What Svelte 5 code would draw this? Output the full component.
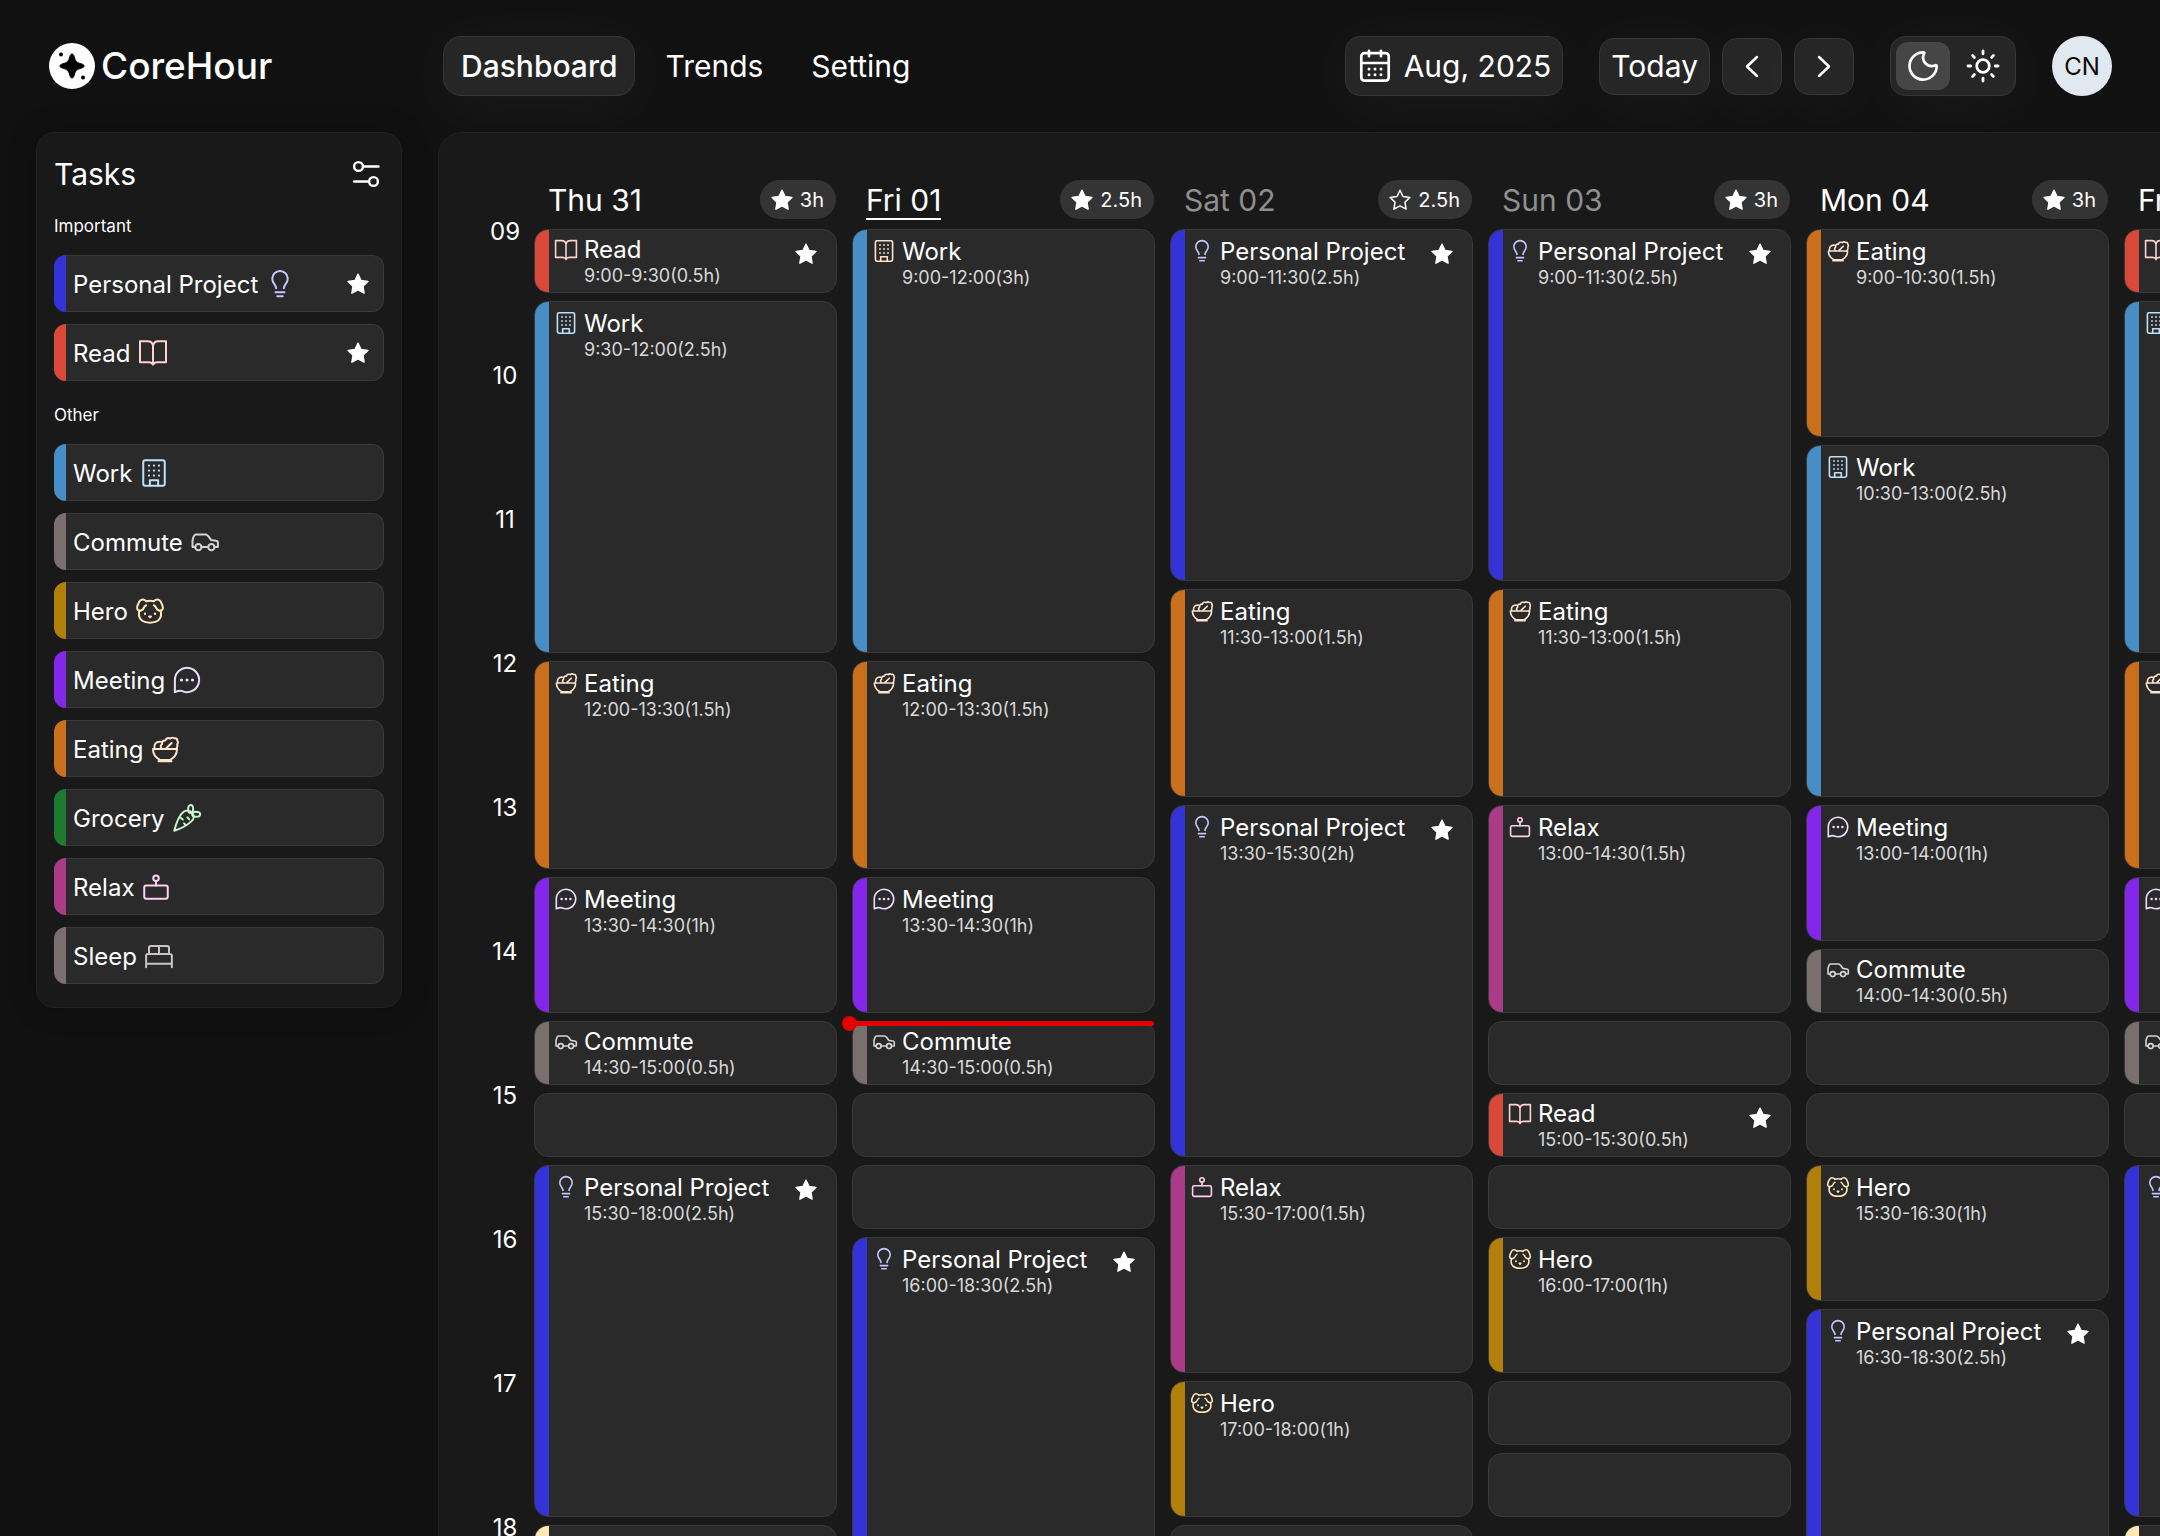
<script>
  let theme = $state('dark')

  const TASKS = {
    project: {name: 'Personal Project', color: '#3333d8', tint: '#c5c5ff'},
    read: {name: 'Read', color: '#d9493a', tint: '#ffd2cd'},
    work: {name: 'Work', color: '#468ec5', tint: '#bfe0fb'},
    commute: {name: 'Commute', color: '#7a6f6f', tint: '#d8d4d4'},
    hero: {name: 'Hero', color: '#b17f0a', tint: '#ffe8b5'},
    meeting: {name: 'Meeting', color: '#8427ea', tint: '#ecdcff'},
    eating: {name: 'Eating', color: '#ca701d', tint: '#ffe4cc'},
    grocery: {name: 'Grocery', color: '#1e7a2d', tint: '#c4f5cc'},
    relax: {name: 'Relax', color: '#ab3b87', tint: '#ffd0ee'},
    sleep: {name: 'Sleep', color: '#7a6f6f', tint: '#c9c5c5'}
  }

  const SECTIONS = [
    {title: 'Important', starred: true, keys: ['project', 'read']},
    {title: 'Other', starred: false, keys: ['work', 'commute', 'hero', 'meeting', 'eating', 'grocery', 'relax', 'sleep']}
  ]

  const HOURS = ['09', '10', '11', '12', '13', '14', '15', '16', '17', '18']

  // slots are half hours, an event without a task is a free slot
  const FREE = {slots: 1}
  const thursday = [
    {task: 'read', slots: 1, time: '9:00-9:30(0.5h)', star: true},
    {task: 'work', slots: 5, time: '9:30-12:00(2.5h)'},
    {task: 'eating', slots: 3, time: '12:00-13:30(1.5h)'},
    {task: 'meeting', slots: 2, time: '13:30-14:30(1h)'},
    {task: 'commute', slots: 1, time: '14:30-15:00(0.5h)'},
    FREE,
    {task: 'project', slots: 5, time: '15:30-18:00(2.5h)', star: true},
    {task: 'hero', slots: 1, time: '18:00-18:30(0.5h)', color: '#ffe8b5'}
  ]

  const DAYS = [
    {label: 'Thu 31', total: '3h', done: true, events: thursday},
    {label: 'Fri 01', total: '2.5h', done: true, today: true, events: [
      {task: 'work', slots: 6, time: '9:00-12:00(3h)', tint: '#ffe4cc'},
      {task: 'eating', slots: 3, time: '12:00-13:30(1.5h)'},
      {task: 'meeting', slots: 2, time: '13:30-14:30(1h)'},
      {task: 'commute', slots: 1, time: '14:30-15:00(0.5h)'},
      FREE,
      FREE,
      {task: 'project', slots: 5, time: '16:00-18:30(2.5h)', star: true}
    ]},
    {label: 'Sat 02', total: '2.5h', weekend: true, events: [
      {task: 'project', slots: 5, time: '9:00-11:30(2.5h)', star: true},
      {task: 'eating', slots: 3, time: '11:30-13:00(1.5h)'},
      {task: 'project', slots: 5, time: '13:30-15:30(2h)', star: true},
      {task: 'relax', slots: 3, time: '15:30-17:00(1.5h)'},
      {task: 'hero', slots: 2, time: '17:00-18:00(1h)'},
      FREE
    ]},
    {label: 'Sun 03', total: '3h', done: true, weekend: true, events: [
      {task: 'project', slots: 5, time: '9:00-11:30(2.5h)', star: true},
      {task: 'eating', slots: 3, time: '11:30-13:00(1.5h)'},
      {task: 'relax', slots: 3, time: '13:00-14:30(1.5h)'},
      FREE,
      {task: 'read', slots: 1, time: '15:00-15:30(0.5h)', star: true},
      FREE,
      {task: 'hero', slots: 2, time: '16:00-17:00(1h)'},
      FREE,
      FREE
    ]},
    {label: 'Mon 04', total: '3h', done: true, events: [
      {task: 'eating', slots: 3, time: '9:00-10:30(1.5h)'},
      {task: 'work', slots: 5, time: '10:30-13:00(2.5h)'},
      {task: 'meeting', slots: 2, time: '13:00-14:00(1h)'},
      {task: 'commute', slots: 1, time: '14:00-14:30(0.5h)'},
      FREE,
      FREE,
      {task: 'hero', slots: 2, time: '15:30-16:30(1h)'},
      {task: 'project', slots: 5, time: '16:30-18:30(2.5h)', star: true}
    ]},
    {label: 'Fri 05', total: '3h', done: true, events: thursday}
  ]

  // 14:31, one hour is two 72px slots
  const nowMinutes = 5 * 60 + 31
  const nowTop = Math.round(nowMinutes * 144 / 60)
</script>

{#snippet star(filled)}
  <svg class="star" viewBox="0 0 24 24" aria-hidden="true">
    <path d="M12 2.2l3 6.3 6.9.9-5 4.8 1.2 6.9-6.1-3.3-6.1 3.3 1.2-6.9-5-4.8 6.9-.9z" fill={filled ? '#fff' : 'none'} stroke="#fff" stroke-width="1.5" stroke-linejoin="round" />
  </svg>
{/snippet}

{#snippet icon(key, tint)}
  <svg class="icon" viewBox="0 0 24 24" fill="none" stroke={tint} stroke-width="1.6" stroke-linecap="round" stroke-linejoin="round" aria-hidden="true">
    {#if key === 'project'}
      <path d="M8.9 15.4c0-3-3.1-3.9-3.1-7.6a6.2 6.2 0 0 1 12.4 0c0 3.7-3.1 4.6-3.1 7.6M8.4 18.6h7.2M9.8 21.8h4.4" />
    {:else if key === 'read'}
      <path d="M12 6.2C11.6 4 10 2.6 7.8 2.6H1.6v16.8h7c1.7 0 2.9.6 3.4 2 .5-1.4 1.7-2 3.4-2h7V2.6h-6.2C14 2.6 12.4 4 12 6.2zM12 6.2v15" />
    {:else if key === 'work'}
      <rect x="3.4" y="1.8" width="17.2" height="20.4" rx="1.6" />
      <path d="M8.7 22v-4.2h6.6V22" />
      <path d="M8 6h.01M12 6h.01M16 6h.01M8 10h.01M12 10h.01M16 10h.01M8 14h.01M12 14h.01M16 14h.01" stroke-width="1.8" />
    {:else if key === 'commute'}
      <path d="M4.2 16H2v-4.4C2 9.3 3.3 6 4.6 6h8c1.6 0 2.7 2.2 4.2 4.4l4 .6c1 .1 1.500.7 1.500 1.500V16h-2.700M9.200 16h5.400" />
      <circle cx="6.7" cy="16.1" r="2.5" />
      <circle cx="17.1" cy="16.1" r="2.5" />
    {:else if key === 'hero'}
      <path d="M8.900 4.200c2-.5 4.200-.5 6.200 0M3.600 11.600c-2 6.500 2.400 9.700 8.400 9.700s10.400-3.200 8.400-9.700" />
      <path d="M8.900 4.200C7.300 2.300 4.700 2.200 3.500 4.400 2.300 6.500 1.200 9.800 2.200 11c1.300 1.400 4 .5 4.700-1.200.4-1.200 1-1.900 2-2.400" />
      <path d="M15.100 4.200c1.600-1.900 4.200-2 5.400.2 1.200 2.100 2.300 5.400 1.300 6.600-1.300 1.400-4 .5-4.700-1.200-.4-1.200-1-1.900-2-2.400" />
      <path d="M8 14.200h.01M16 14.200h.01" stroke-width="1.9" />
      <path d="M11.200 16.300h1.600l-.8.8z" />
    {:else if key === 'meeting'}
      <path d="M2.300 21.700V12a9.700 9.700 0 1 1 5.400 8.700c-1.600-.2-3.400.2-5.400 1z" />
      <path d="M7.600 12h.01M12 12h.01M16.400 12h.01" stroke-width="2.5" />
    {:else if key === 'eating'}
      <path d="M2.400 12h19.200c0 4-2.200 6.900-5.400 8.700H7.800C4.600 18.900 2.400 16 2.400 12zM6.800 21.800h10.400M3.600 11.600c-.6-3.400 1-5.900 5.200-5.400" />
      <path d="M9.200 11.600c-1-1.200-.8-2.700.4-3.400-.2-2 1-3.400 2.700-3 .6-1.900 2.600-2.500 3.900-1.500 1-1 2.500-.9 3.200-.2 1.400-.5 2.700.3 2.400 1.800.9.900.6 2.200 0 2.800.5 1.500-.1 2.500-.6 3.600M13 11.400l4.300-4.200" />
    {:else if key === 'grocery'}
      <path d="M1.800 22.200C3 17.600 5.800 9.600 9.300 7c2.400-1.600 5.300-.9 6.900.9 1.800 2.100 1.500 4.800-.5 6.600-3.300 3-9.400 6.400-13.900 7.700zM7 11.800l1.700 1.500M12.300 11.500l1.500 1.600M9.600 16.300l1.600 1.500" />
      <ellipse cx="14.900" cy="4.700" rx="2" ry="3.2" />
      <ellipse cx="19.300" cy="9" rx="3.2" ry="2" />
    {:else if key === 'relax'}
      <rect x="2.6" y="10.8" width="18.8" height="10.6" rx="1.6" />
      <circle cx="12" cy="4.9" r="2.2" />
      <path d="M12 7.200v3.600" />
    {:else}
      <path d="M1.700 21v-9.200c0-.9.600-1.500 1.500-1.500h17.600c.9 0 1.500.6 1.500 1.500V21M1.700 18.200h20.600M4 10.200V5.500C4 4.600 4.600 4 5.500 4h13c.9 0 1.500.6 1.500 1.500v4.700M12 4v6.200" />
    {/if}
  </svg>
{/snippet}

<div class="page">
  <header class="topbar">
    <a class="brand" href="/">
      <svg width="46" height="46" viewBox="0 0 46 46" aria-hidden="true">
        <circle cx="23" cy="23" r="23" fill="#fff" />
        <path d="M23 11c1 0 1.500.7 2 2.200 1.500 5.300 2.500 6.300 7.800 7.800 1.500.5 2.200 1 2.200 2s-.7 1.500-2.200 2c-5.300 1.500-6.300 2.500-7.800 7.800-.5 1.500-1 2.200-2 2.200s-1.500-.7-2-2.200c-1.500-5.300-2.500-6.300-7.800-7.800-1.500-.5-2.200-1-2.200-2s.7-1.500 2.200-2c5.300-1.500 6.300-2.500 7.800-7.800.5-1.500 1-2.200 2-2.200z" stroke="#000" />
        <circle cx="12" cy="11.5" r="2" />
        <circle cx="34" cy="34.5" r="2" />
      </svg>
      <span>CoreHour</span>
    </a>

    <nav class="links">
      <a class="link active" href="/dashboard">Dashboard</a>
      <a class="link" href="/trends">Trends</a>
      <a class="link" href="/setting">Setting</a>
    </nav>

    <div class="tools">
      <button class="control month">
        <svg width="36" height="36" viewBox="0 0 36 36" fill="none" stroke="#fff" stroke-width="2.7" stroke-linecap="round" aria-hidden="true">
          <rect x="4.3" y="5.2" width="27.4" height="27.4" rx="3" />
          <path d="M12 2.800v5.400M24 2.800v5.400M4.300 15h27.400" />
          <path d="M12 21h.01M18 21h.01M24 21h.01M12 26.700h.01M18 26.700h.01M24 26.700h.01" stroke-width="3" />
        </svg>
        Aug, 2025
      </button>

      <div class="pager">
        <button class="control">Today</button>
        <button class="control arrow" aria-label="Previous">
          <svg width="36" height="36" viewBox="0 0 36 36" fill="none" stroke="#fff" stroke-width="2.5" stroke-linecap="round" stroke-linejoin="round"><path d="M23 9l-10 9.500 10 9.500" /></svg>
        </button>
        <button class="control arrow" aria-label="Next">
          <svg width="36" height="36" viewBox="0 0 36 36" fill="none" stroke="#fff" stroke-width="2.5" stroke-linecap="round" stroke-linejoin="round"><path d="M13 9l10 9.500L13 28" /></svg>
        </button>
      </div>

      <div class="control themes">
        <button class:on={theme === 'dark'} aria-label="Dark theme" onclick={() => theme = 'dark'}>
          <svg width="36" height="36" viewBox="0 0 36 36" fill="none" stroke="#fff" stroke-width="2.7" stroke-linecap="round" stroke-linejoin="round"><path d="M18.800 4.400A13.600 13.600 0 1 0 31.700 18.300c0-1.200-1-1.400-1.800-.8A8.600 8.600 0 0 1 18.800 6.200c.6-.8.8-1.800 0-1.800z" /></svg>
        </button>
        <button class:on={theme === 'light'} aria-label="Light theme" onclick={() => theme = 'light'}>
          <svg width="36" height="36" viewBox="0 0 36 36" fill="none" stroke="#fff" stroke-width="2.8" stroke-linecap="round"><circle cx="18" cy="18" r="6.3" /><path d="M18 3v2.800M18 30.200V33M3 18h2.800M30.200 18H33M7.600 7.600l1.800 1.800M26.600 26.600l1.800 1.800M7.600 28.400l1.800-1.800M26.600 9.400l1.800-1.800" /></svg>
        </button>
      </div>

      <button class="avatar">CN</button>
    </div>
  </header>

  <div class="content">
    <aside class="sidebar">
      <div class="sidebar-head">
        <h2>Tasks</h2>
        <button class="filter" aria-label="Filter tasks">
          <svg width="36" height="36" viewBox="0 0 36 36" fill="none" stroke="#fff" stroke-width="2.4" stroke-linecap="round"><circle cx="10.5" cy="10.5" r="4.4" /><path d="M15.500 10.500H30.500M6 25.500h14.500" /><circle cx="25.5" cy="25.5" r="4.4" /></svg>
        </button>
      </div>
      {#each SECTIONS as section}
        <section class="group">
          <h3>{section.title}</h3>
          {#each section.keys as key}
            <button class="task">
              <span class="bar" style:background={TASKS[key].color}></span>
              <span class="task-name">{TASKS[key].name}</span>
              {@render icon(key, TASKS[key].tint)}
              {#if section.starred}{@render star(true)}{/if}
            </button>
          {/each}
        </section>
      {/each}
    </aside>

    <main class="calendar">
      <div class="hours">
        {#each HOURS as hour}
          <span>{hour}</span>
        {/each}
      </div>
      {#each DAYS as day}
        <section class="day">
          <div class="day-head" class:weekend={day.weekend} class:today={day.today}>
            <h2>{day.label}</h2>
            <span class="total">{@render star(day.done)}{day.total}</span>
          </div>
          <div class="slots">
            {#each day.events as event}
              <article class="event" class:short={event.slots === 1} style:grid-row="span {event.slots}">
                {#if event.task}
                  <span class="bar" style:background={event.color ?? TASKS[event.task].color}></span>
                  {@render icon(event.task, event.tint ?? TASKS[event.task].tint)}
                  <div class="event-text">
                    <h4>{TASKS[event.task].name}</h4>
                    <p>{event.time}</p>
                  </div>
                  {#if event.star}{@render star(true)}{/if}
                {/if}
              </article>
            {/each}
            {#if day.today}
              <div class="now" style:top="{nowTop}px"></div>
            {/if}
          </div>
        </section>
      {/each}
    </main>
  </div>
</div>

<style>
:global(body) {
  background: #111;
}

.page {
  height: 100vh;
  display: flex;
  flex-direction: column;
  overflow: hidden;
  background: #111;
  color: #fff;
  font-family: Inter, "Liberation Sans", sans-serif;
  font-size: 24px;
}

.page * {
  box-sizing: border-box;
}

h2, h3, h4, p {
  margin: 0;
  font-weight: 400;
}

h2 {
  font-size: 30px;
  line-height: 36px;
}

svg {
  display: block;
  flex: none;
}

button {
  padding: 0;
  border: none;
  background: none;
  color: inherit;
  font: inherit;
  cursor: pointer;
}

a {
  color: inherit;
  text-decoration: none;
}

.topbar {
  flex: none;
  display: flex;
  align-items: center;
  padding: 36px 48px 36px 49px;
}

.brand {
  width: 394px;
  display: flex;
  align-items: center;
  gap: 6px;
  font-size: 37px;
  line-height: 46px;
  font-weight: 500;
}

.links {
  display: flex;
  gap: 12px;
  font-size: 30px;
}

.link {
  height: 60px;
  padding: 0 17px;
  border: 1px solid transparent;
  border-radius: 18px;
  line-height: 58px;
}

.link.active, .control {
  background: #262626;
  border: 1px solid #363636;
  box-shadow: 0 8px 60px rgba(255, 255, 255, .05);
}

.link.active {
  font-weight: 500;
}

.tools {
  margin-left: auto;
  display: flex;
  align-items: center;
  gap: 36px;
}

.control {
  height: 57px;
  display: flex;
  align-items: center;
  justify-content: center;
  padding: 0 11px;
  border-radius: 15px;
  font-size: 30px;
}

.month, .themes {
  height: 60px;
}

.month {
  gap: 11px;
}

.pager {
  display: flex;
  gap: 12px;
}

.arrow {
  width: 60px;
}

.themes {
  gap: 6px;
  padding: 5px;
}

.themes button {
  width: 54px;
  height: 48px;
  display: flex;
  align-items: center;
  justify-content: center;
  border-radius: 12px;
}

.themes .on {
  background: #464646;
}

.avatar {
  width: 60px;
  height: 60px;
  border-radius: 50%;
  background: #e2e8f0;
  color: #0a0a0a;
}

.content {
  flex: 1;
  min-height: 0;
  display: flex;
  align-items: flex-start;
  gap: 36px;
  padding-left: 36px;
}

.sidebar {
  flex: none;
  width: 366px;
  padding: 23px 17px;
  border: 1px solid #212121;
  border-radius: 18px;
  background: #191919;
  box-shadow: 0 0 30px rgba(0, 0, 0, .2);
}

.sidebar-head {
  display: flex;
  justify-content: space-between;
}

.group {
  display: flex;
  flex-direction: column;
  gap: 12px;
  margin-top: 17px;
}

.group h3 {
  padding-top: 1px;
  font-size: 17px;
  line-height: 33px;
}

.task {
  height: 57px;
  display: flex;
  align-items: center;
  gap: 7px;
  overflow: hidden;
  border-radius: 12px;
  background: #2a2a2a;
  box-shadow: inset 0 0 0 1px #393939;
}

.task-name {
  padding-top: 1px;
}

.bar {
  flex: none;
  align-self: stretch;
  width: 12px;
}

.icon {
  width: 30px;
  height: 30px;
}

.star {
  width: 24px;
  height: 24px;
}

.task .star {
  margin: 0 14px 0 auto;
}

.calendar {
  flex: 1;
  min-width: 0;
  align-self: stretch;
  display: flex;
  overflow: hidden;
  padding: 38px 0 0 35px;
  border: 1px solid #212121;
  border-width: 1px 0 0 1px;
  border-radius: 24px 0 0 0;
  background: #191919;
}

.hours {
  flex: none;
  width: 60px;
  padding: 46px 0 0 2px;
  display: flex;
  flex-direction: column;
  gap: 114px;
  text-align: center;
  line-height: 30px;
}

.day {
  flex: none;
  width: 303px;
  margin-right: 15px;
}

.day-head {
  height: 58px;
  display: flex;
  align-items: center;
  justify-content: space-between;
  padding: 0 1px 1px 14px;
}

.weekend h2 {
  color: #8f8f8f;
}

.today h2 {
  box-shadow: 0 2px #fff;
}

.total {
  height: 39px;
  display: flex;
  align-items: center;
  gap: 6px;
  padding: 0 12px 0 10px;
  border-radius: 20px;
  background: #343434;
  font-size: 20px;
}

.slots {
  position: relative;
  display: grid;
  grid-auto-rows: 64px;
  gap: 8px;
}

.event {
  display: flex;
  align-items: flex-start;
  overflow: hidden;
  border: 1px solid #393939;
  border-radius: 14px;
  background: #2a2a2a;
}

.event .bar {
  width: 14px;
}

.event .icon {
  width: 24px;
  height: 24px;
  margin: 9px 6px 0 5px;
}

.event-text {
  padding-top: 7px;
  white-space: nowrap;
}

.short .icon {
  margin-top: 8px;
}

.short .event-text {
  padding-top: 5px;
}

.event h4 {
  font-size: 24px;
  line-height: 30px;
}

.event p {
  color: #d8d8d8;
  font-size: 18px;
  line-height: 22px;
}

.event .star {
  margin: 12px 18px 0 auto;
}

.now {
  position: absolute;
  left: 0;
  right: 1px;
  height: 5px;
  margin-top: -2px;
  border-radius: 3px;
  background: #e60000;
}

.now::before {
  content: "";
  position: absolute;
  left: -10px;
  top: -5px;
  width: 15px;
  height: 15px;
  border-radius: 50%;
  background: #e60000;
}
</style>
